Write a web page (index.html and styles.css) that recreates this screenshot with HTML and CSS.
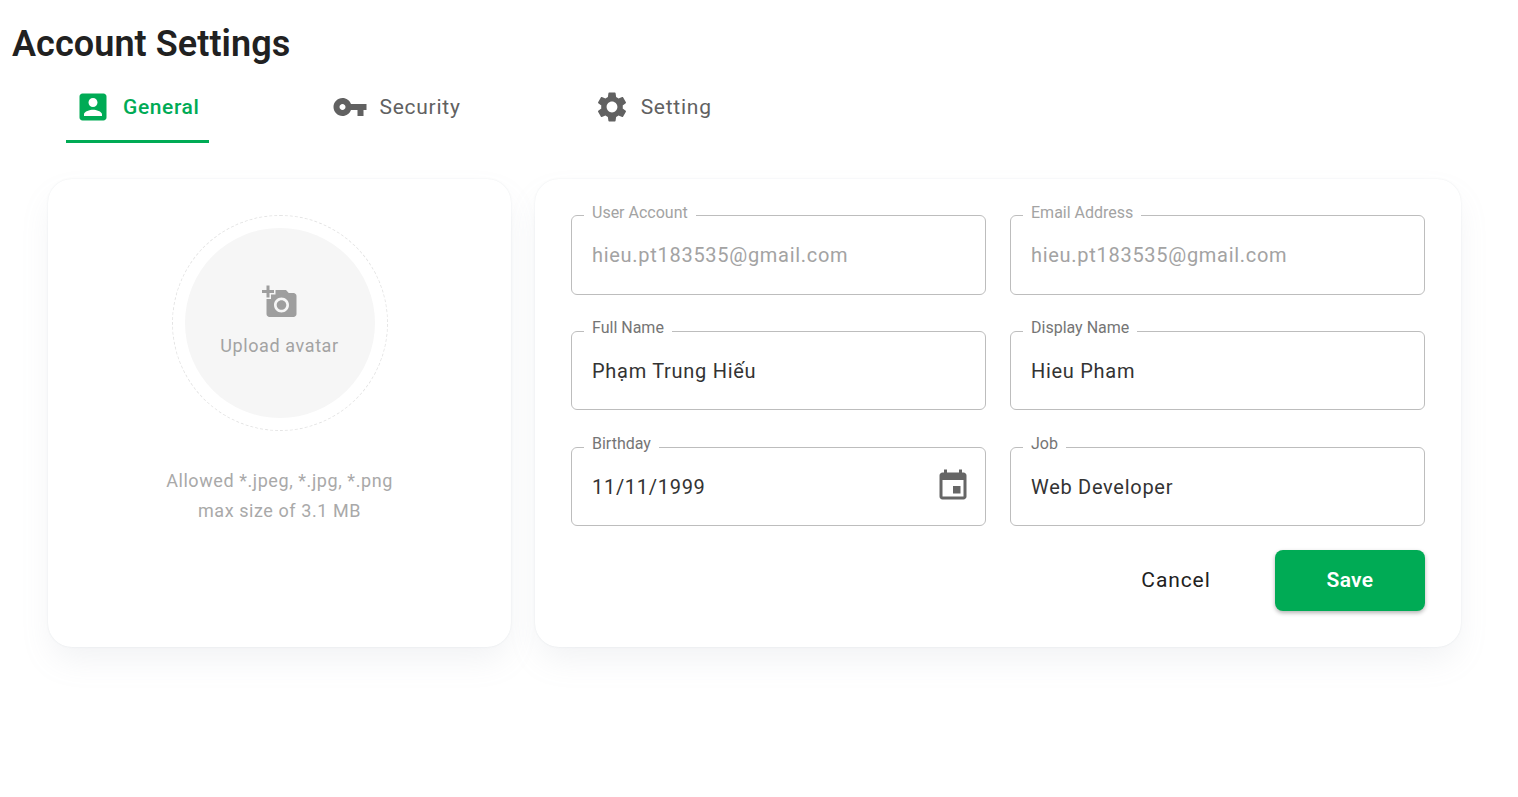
FILE: index.html
```html
<!DOCTYPE html>
<html>
<head>
<meta charset="utf-8">
<title>Account Settings</title>
<link rel="stylesheet" href="styles.css">
</head>
<body>
<h1 class="title">Account Settings</h1>

<div class="tabs">
  <a class="tab active">
    <svg class="tab-icon" viewBox="0 0 24 24"><path d="M3 5v14c0 1.1.89 2 2 2h14c1.1 0 2-.9 2-2V5c0-1.1-.9-2-2-2H5c-1.11 0-2 .9-2 2zm12 4c0 1.66-1.34 3-3 3s-3-1.34-3-3 1.34-3 3-3 3 1.34 3 3zm-9 8c0-2 4-3.1 6-3.1s6 1.1 6 3.1v1H6v-1z"/></svg>
    General
  </a>
  <a class="tab">
    <svg class="tab-icon" viewBox="0 0 24 24"><path d="M12.65 10C11.83 7.67 9.61 6 7 6c-3.31 0-6 2.69-6 6s2.69 6 6 6c2.61 0 4.83-1.67 5.65-4H17v4h4v-4h2v-4H12.65zM7 14c-1.1 0-2-.9-2-2s.9-2 2-2 2 .9 2 2-.9 2-2 2z"/></svg>
    Security
  </a>
  <a class="tab">
    <svg class="tab-icon" viewBox="0 0 24 24"><path d="M19.14 12.94c.04-.3.06-.61.06-.94 0-.32-.02-.64-.07-.94l2.03-1.58c.18-.14.23-.41.12-.61l-1.92-3.32c-.12-.22-.37-.29-.59-.22l-2.39.96c-.5-.38-1.03-.7-1.62-.94l-.36-2.54c-.04-.24-.24-.41-.48-.41h-3.84c-.24 0-.43.17-.47.41l-.36 2.54c-.59.24-1.13.57-1.62.94l-2.39-.96c-.22-.08-.47 0-.59.22L2.74 8.87c-.12.21-.08.47.12.61l2.03 1.58c-.05.3-.09.63-.09.94s.02.64.07.94l-2.03 1.58c-.18.14-.23.41-.12.61l1.92 3.32c.12.22.37.29.59.22l2.39-.96c.5.38 1.03.7 1.62.94l.36 2.54c.05.24.24.41.48.41h3.84c.24 0 .44-.17.47-.41l.36-2.54c.59-.24 1.13-.56 1.62-.94l2.39.96c.22.08.47 0 .59-.22l1.92-3.32c.12-.22.07-.47-.12-.61l-2.01-1.58zM12 15.6c-1.98 0-3.6-1.62-3.6-3.6s1.62-3.6 3.6-3.6 3.6 1.62 3.6 3.6-1.62 3.6-3.6 3.6z"/></svg>
    Setting
  </a>
</div>

<div class="content">
  <div class="card avatar-card">
    <div class="avatar-ring">
      <div class="avatar-drop">
        <svg class="avatar-icon" viewBox="0 0 24 24"><path d="M3 4V1h2v3h3v2H5v3H3V6H0V4h3zm3 6V7h3V4h7l1.83 2H21c1.1 0 2 .9 2 2v12c0 1.1-.9 2-2 2H5c-1.1 0-2-.9-2-2V10h3zm7 9c2.76 0 5-2.24 5-5s-2.24-5-5-5-5 2.24-5 5 2.24 5 5 5zm-3.2-5c0 1.77 1.43 3.2 3.2 3.2s3.2-1.43 3.2-3.2-1.43-3.2-3.2-3.2-3.2 1.43-3.2 3.2z"/></svg>
        <span>Upload avatar</span>
      </div>
    </div>
    <p class="hint">Allowed *.jpeg, *.jpg, *.png<br>max size of 3.1 MB</p>
  </div>

  <form class="card form-card">
    <div class="fields">
      <fieldset class="field disabled">
        <legend>User Account</legend>
        <input type="text" value="hieu.pt183535@gmail.com" disabled>
      </fieldset>
      <fieldset class="field disabled">
        <legend>Email Address</legend>
        <input type="text" value="hieu.pt183535@gmail.com" disabled>
      </fieldset>
      <fieldset class="field">
        <legend>Full Name</legend>
        <input type="text" value="Phạm Trung Hiếu">
      </fieldset>
      <fieldset class="field">
        <legend>Display Name</legend>
        <input type="text" value="Hieu Pham">
      </fieldset>
      <fieldset class="field">
        <legend>Birthday</legend>
        <input type="text" value="11/11/1999">
        <svg class="field-icon" viewBox="0 0 24 24"><path d="M17 12h-5v5h5v-5zM16 1v2H8V1H6v2H5c-1.11 0-1.99.9-1.99 2L3 19c0 1.1.89 2 2 2h14c1.1 0 2-.9 2-2V5c0-1.1-.9-2-2-2h-1V1h-2zm3 18H5V8h14v11z"/></svg>
      </fieldset>
      <fieldset class="field">
        <legend>Job</legend>
        <input type="text" value="Web Developer">
      </fieldset>
    </div>
    <div class="actions">
      <button type="button" class="btn-cancel">Cancel</button>
      <button type="button" class="btn-save">Save</button>
    </div>
  </form>
</div>
</body>
</html>
```

FILE: styles.css
```css
* {
  box-sizing: border-box;
}
body {
  margin: 0;
  min-height: 100vh;
  background: #fff;
  font-family: Roboto, "Liberation Sans", sans-serif;
  color: #212121;
}
.title {
  margin: 0;
  padding: 22px 0 0 12px;
  height: 72px;
  font-size: 36px;
  line-height: 44px;
  font-weight: 600;
  letter-spacing: 0.07px;
}

.tabs {
  display: flex;
  margin-left: 66px;
  height: 71px;
}
.tab {
  display: flex;
  align-items: center;
  height: 71px;
  padding: 2px 10px 0 9px;
  margin-right: 114px;
  font-size: 21px;
  font-weight: 400;
  letter-spacing: 0.75px;
  color: #616161;
  border-bottom: 3px solid transparent;
}
.tab.active {
  font-weight: 500;
  letter-spacing: 0.6px;
  color: #00ab55;
  border-bottom-color: #00ab55;
}
.tab-icon {
  width: 36px;
  height: 36px;
  margin-right: 11px;
  fill: currentColor;
}
.tab.active .tab-icon {
  margin-right: 12px;
}

.content {
  display: grid;
  grid-template-columns: 463px 926px;
  gap: 24px;
  margin: 36px 0 0 48px;
}
.card {
  height: 468px;
  border-radius: 24px;
  background: #fff;
  box-shadow: 0 0 2px rgba(145, 158, 171, 0.2), 0 16px 32px -4px rgba(145, 158, 171, 0.13);
}

.avatar-card {
  display: flex;
  flex-direction: column;
  align-items: center;
  padding-top: 36px;
}
.avatar-ring {
  width: 216px;
  height: 216px;
  padding: 12px;
  border: 1px dashed #e4e4e4;
  border-radius: 50%;
}
.avatar-drop {
  display: flex;
  flex-direction: column;
  align-items: center;
  justify-content: center;
  width: 190px;
  height: 190px;
  padding-bottom: 7px;
  border-radius: 50%;
  background: #f6f6f6;
  color: #a3a3a3;
  font-size: 18px;
  letter-spacing: 0.6px;
}
.avatar-icon {
  width: 36px;
  height: 36px;
  margin-bottom: 15px;
  fill: #9e9e9e;
}
.hint {
  margin: 35px 0 0;
  text-align: center;
  font-size: 18px;
  line-height: 30px;
  letter-spacing: 0.57px;
  color: #a9a9a9;
}

.form-card {
  padding: 23.75px 36px 0;
}
.fields {
  display: grid;
  grid-template-columns: 415px 415px;
  column-gap: 24px;
  row-gap: 23.7px;
}
.field {
  display: flex;
  align-items: center;
  height: 92px;
  margin: 0;
  padding: 0 20px;
  border: 1px solid #bdbdbd;
  border-radius: 6px;
  min-width: 0;
}
.field legend {
  margin-left: -8px;
  padding: 0 8px 6px;
  font-size: 16px;
  line-height: 20px;
  color: #757575;
}
.field input {
  flex: 1;
  min-width: 0;
  height: 40px;
  margin-top: -12px;
  padding: 0;
  border: 0;
  outline: 0;
  background: none;
  font-family: inherit;
  font-size: 20px;
  letter-spacing: 0.71px;
  color: #333;
}
.field.disabled legend {
  color: #a3a3a3;
}
.field.disabled input {
  color: #a3a3a3;
}
.field-icon {
  width: 36px;
  height: 36px;
  margin-top: -14px;
  margin-right: -6px;
  fill: #666;
}

.actions {
  display: flex;
  justify-content: flex-end;
  align-items: center;
  column-gap: 24px;
  margin-top: 23.85px;
}
.actions button {
  width: 150px;
  height: 61px;
  padding: 0;
  border: 0;
  border-radius: 8px;
  font-family: inherit;
  font-size: 21px;
}
.btn-cancel {
  font-weight: 400;
  letter-spacing: 0.9px;
  background: none;
  color: #212121;
}
.btn-save {
  font-weight: 600;
  letter-spacing: 0.3px;
  background: #00ab55;
  color: #fff;
  box-shadow: 0 2px 4px rgba(0, 0, 0, 0.3);
}
```
